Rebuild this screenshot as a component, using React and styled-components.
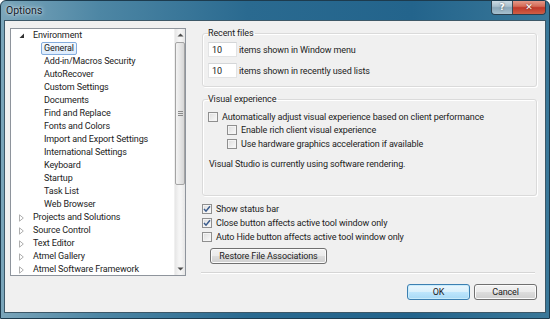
import React from 'react';
import styled, { createGlobalStyle } from 'styled-components';

const Global = createGlobalStyle`
  html, body { margin: 0; padding: 0; background: #ffffff; }
  body { font-family: Roboto, "Noto Sans", sans-serif; }
  * { box-sizing: border-box; }
`;

const FONT = `Roboto, "Noto Sans", sans-serif`;

const Window = styled.div`
  width: 550px;
  height: 319px;
  border: 1px solid #1d3b4e;
  border-radius: 6px 6px 0 0;
  background: linear-gradient(90deg, #7aa5ba 0%, #4d86a4 18%, #2a6a90 45%, #23648c 75%, #3a7899 100%);
  display: flex;
  flex-direction: column;
  font-family: ${FONT};
  font-size: 9px;
  letter-spacing: -0.12px;
  color: #222222;
  overflow: hidden;
`;

const TitleBar = styled.div`
  height: 19px;
  display: flex;
  align-items: flex-start;
  padding-left: 5px;
  flex: none;
`;

const Title = styled.span`
  align-self: center;
  font-size: 10.5px;
  letter-spacing: 0;
  color: #15202a;
  text-shadow: 0 0 5px rgba(255, 255, 255, 0.8), 0 0 2px rgba(255, 255, 255, 0.6);
`;

const Caption = styled.div`
  margin-left: auto;
  margin-right: 3px;
  margin-top: -1px;
  display: flex;
  border: 1px solid #2b3f4e;
  border-top: none;
  border-radius: 0 0 4px 4px;
  overflow: hidden;
  height: 15px;
`;

const CapButton = styled.div`
  width: ${(p) => p.$w}px;
  height: 100%;
  display: flex;
  align-items: center;
  justify-content: center;
  color: #ffffff;
  font-family: "DejaVu Sans", sans-serif;
  font-weight: bold;
  font-size: 9px;
  text-shadow: 0 0 2px rgba(0, 0, 0, 0.6);
  background: ${(p) =>
    p.$close
      ? 'linear-gradient(180deg, #e8a191 0%, #d56b57 45%, #c0392a 55%, #cf5f45 100%)'
      : 'linear-gradient(180deg, #d3e0e8 0%, #a9bfcd 45%, #8aa6b8 55%, #a7c0cf 100%)'};
  border-left: ${(p) => (p.$close ? '1px solid #3b4a55' : 'none')};
`;

const Client = styled.div`
  flex: 1;
  margin: 0 3px 5px 3px;
  border: 1px solid #3d5868;
  background: #f0f0f0;
  display: grid;
  grid-template-columns: 176px 1fr;
  column-gap: 16px;
  padding: 7px 9px 0 5px;
`;

const Tree = styled.div`
  height: 248px;
  border: 1px solid #8e949c;
  background: #ffffff;
  display: flex;
  overflow: hidden;
`;

const TreeList = styled.div`
  flex: 1;
  overflow: hidden;
`;

const Row = styled.div`
  height: 13px;
  display: flex;
  align-items: center;
  padding-left: ${(p) => (p.$level === 1 ? 30 : 8)}px;
  white-space: nowrap;
`;

const Arrow = styled.span`
  width: 11px;
  height: 13px;
  display: flex;
  align-items: center;
  justify-content: flex-start;
  flex: none;
`;

const Label = styled.span`
  padding: 0 2px;
  line-height: 11px;
  border: 1px solid ${(p) => (p.$selected ? '#84acdd' : 'transparent')};
  border-radius: 2px;
  background: ${(p) => (p.$selected ? 'linear-gradient(180deg, #f4f9fe, #dcebfc)' : 'transparent')};
`;

const ScrollBar = styled.div`
  width: 11px;
  flex: none;
  background: linear-gradient(90deg, #e6e6e6, #f5f5f5 40%, #f5f5f5 60%, #e6e6e6);
  border-left: 1px solid #f0f0f0;
  display: flex;
  flex-direction: column;
  align-items: center;
`;

const ScrollArrow = styled.div`
  height: 12px;
  width: 100%;
  display: flex;
  align-items: center;
  justify-content: center;
`;

const Thumb = styled.div`
  width: 10px;
  height: 143px;
  margin-top: 1px;
  border: 1px solid #a4a4a4;
  border-radius: 2px;
  background: linear-gradient(90deg, #f3f3f3, #e6e6e6 50%, #d6d6d6);
  display: flex;
  align-items: center;
  justify-content: center;
`;

const Spacer = styled.div`
  flex: 1;
`;

const Right = styled.div`
  display: flex;
  flex-direction: column;
  width: 335px;
`;

const Group = styled.fieldset`
  margin: ${(p) => p.$mt}px 0 0 0;
  border: 1px solid #dadada;
  border-radius: 3px;
  box-shadow: inset 1px 1px 0 #ffffff, 1px 1px 0 #ffffff;
  padding: ${(p) => p.$pt}px 6px ${(p) => p.$pb}px 5px;
  min-width: 0;
  display: flex;
  flex-direction: column;
`;

const Legend = styled.legend`
  padding: 0 2px 0 0;
  margin-left: 0;
  line-height: 12px;
`;

const FieldRow = styled.div`
  display: flex;
  align-items: center;
  gap: 2px;
  margin-top: ${(p) => p.$mt || 0}px;
`;

const NumBox = styled.div`
  width: 29px;
  height: 15px;
  background: #ffffff;
  border: 1px solid #e2e3e4;
  border-top-color: #d4d6d8;
  padding-left: 3px;
  display: flex;
  align-items: center;
`;

const CheckRow = styled.div`
  height: ${(p) => p.$h || 13}px;
  display: flex;
  align-items: center;
  gap: 4px;
  padding-left: ${(p) => p.$indent || 0}px;
  margin-top: ${(p) => p.$mt || 0}px;
  white-space: nowrap;
`;

const Box = styled.span`
  width: 10px;
  height: 10px;
  flex: none;
  border: 1px solid #8f8f8f;
  background: linear-gradient(135deg, #dcdcdc, #fbfbfb);
  box-shadow: inset 0 0 0 1px #f4f4f4;
  display: flex;
  align-items: center;
  justify-content: center;
`;

const Note = styled.div`
  margin-top: 8px;
  line-height: 12px;
  padding-left: 1px;
`;

const Button = styled.div`
  width: ${(p) => p.$w}px;
  height: 16px;
  display: flex;
  align-items: center;
  justify-content: center;
  border: 1px solid ${(p) => (p.$default ? '#3c7fb1' : '#707070')};
  border-radius: 3px;
  background: ${(p) =>
    p.$default
      ? 'linear-gradient(180deg, #eaf6fd 0%, #d9f0fc 50%, #bee6fd 51%, #a7d9f5 100%)'
      : 'linear-gradient(180deg, #f2f2f2 0%, #ebebeb 50%, #dddddd 51%, #cfcfcf 100%)'};
  box-shadow: inset 0 0 0 1px ${(p) => (p.$default ? '#c9ecfc' : '#fbfbfb')};
  margin-top: ${(p) => p.$mt || 0}px;
  margin-left: ${(p) => p.$ml || 0}px;
`;

const Separator = styled.div`
  height: 2px;
  margin-top: 8px;
  border-top: 1px solid #d5d5d5;
  border-bottom: 1px solid #ffffff;
  margin-right: 2px;
  margin-left: -1px;
`;

const Footer = styled.div`
  display: flex;
  justify-content: flex-end;
  gap: 4px;
  margin-top: 10px;
`;

const Check = () => (
  <svg width="8" height="8" viewBox="0 0 8 8">
    <path d="M1 4 L3 6.2 L7 1.2" fill="none" stroke="#3a5b8c" strokeWidth="1.5" />
  </svg>
);

const CheckBox = ({ checked }) => <Box>{checked && <Check />}</Box>;

const Expanded = () => (
  <svg width="6" height="6" viewBox="0 0 6 6">
    <path d="M5 0.5 L5 5 L0.5 5 Z" fill="#303030" />
  </svg>
);

const Collapsed = () => (
  <svg width="5" height="8" viewBox="0 0 5 8">
    <path d="M0.5 0.8 L4.3 4 L0.5 7.2 Z" fill="#ffffff" stroke="#a6a6a6" strokeWidth="0.9" />
  </svg>
);

const UpArrow = ({ down }) => (
  <svg width="7" height="4" viewBox="0 0 7 4">
    <path d={down ? 'M0.5 0.5 L6.5 0.5 L3.5 3.5 Z' : 'M0.5 3.5 L6.5 3.5 L3.5 0.5 Z'} fill="#4d4d4d" />
  </svg>
);

const Grip = () => (
  <svg width="5" height="5" viewBox="0 0 5 5">
    <path d="M0 0.5 H5 M0 2.5 H5 M0 4.5 H5" stroke="#8a8a8a" strokeWidth="1" />
  </svg>
);

const envChildren = [
  'General',
  'Add-in/Macros Security',
  'AutoRecover',
  'Custom Settings',
  'Documents',
  'Find and Replace',
  'Fonts and Colors',
  'Import and Export Settings',
  'International Settings',
  'Keyboard',
  'Startup',
  'Task List',
  'Web Browser',
];

const topLevel = [
  'Projects and Solutions',
  'Source Control',
  'Text Editor',
  'Atmel Gallery',
  'Atmel Software Framework',
];

export default function App() {
  return (
    <>
      <Global />
      <Window>
        <TitleBar>
          <Title>Options</Title>
          <Caption>
            <CapButton $w={20}>?</CapButton>
            <CapButton $w={33} $close>✕</CapButton>
          </Caption>
        </TitleBar>
        <Client>
          <Tree>
            <TreeList>
              <Row>
                <Arrow>
                  <Expanded />
                </Arrow>
                <Label>Environment</Label>
              </Row>
              {envChildren.map((c, i) => (
                <Row key={c} $level={1}>
                  <Label $selected={i === 0}>{c}</Label>
                </Row>
              ))}
              {topLevel.map((c) => (
                <Row key={c}>
                  <Arrow>
                    <Collapsed />
                  </Arrow>
                  <Label>{c}</Label>
                </Row>
              ))}
            </TreeList>
            <ScrollBar>
              <ScrollArrow>
                <UpArrow />
              </ScrollArrow>
              <Thumb>
                <Grip />
              </Thumb>
              <Spacer />
              <ScrollArrow>
                <UpArrow down />
              </ScrollArrow>
            </ScrollBar>
          </Tree>

          <Right>
            <Group $mt={-1} $pt={3} $pb={8}>
              <Legend>Recent files</Legend>
              <FieldRow>
                <NumBox>10</NumBox>
                <span>items shown in Window menu</span>
              </FieldRow>
              <FieldRow $mt={6}>
                <NumBox>10</NumBox>
                <span>items shown in recently used lists</span>
              </FieldRow>
            </Group>

            <Group $mt={6} $pt={5} $pb={25}>
              <Legend>Visual experience</Legend>
              <CheckRow>
                <CheckBox />
                <span>Automatically adjust visual experience based on client performance</span>
              </CheckRow>
              <CheckRow $indent={19}>
                <CheckBox />
                <span>Enable rich client visual experience</span>
              </CheckRow>
              <CheckRow $indent={19} $mt={1}>
                <CheckBox />
                <span>Use hardware graphics acceleration if available</span>
              </CheckRow>
              <Note>Visual Studio is currently using software rendering.</Note>
            </Group>

            <CheckRow $h={14} $mt={6}>
              <CheckBox checked />
              <span>Show status bar</span>
            </CheckRow>
            <CheckRow $h={14}>
              <CheckBox checked />
              <span>Close button affects active tool window only</span>
            </CheckRow>
            <CheckRow $h={14}>
              <CheckBox />
              <span>Auto Hide button affects active tool window only</span>
            </CheckRow>
            <Button $w={117} $mt={4} $ml={8}>
              Restore File Associations
            </Button>
            <Separator />
            <Footer>
              <Button $w={63} $default>
                OK
              </Button>
              <Button $w={63}>Cancel</Button>
            </Footer>
          </Right>
        </Client>
      </Window>
    </>
  );
}
